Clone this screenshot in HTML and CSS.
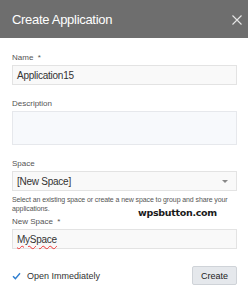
FILE: index.html
```html
<!DOCTYPE html>
<html>
<head>
<meta charset="utf-8">
<link rel="stylesheet" href="styles.css">
</head>
<body>
<div class="dialog">
  <div class="header">
    <span class="title">Create Application</span>
    <svg class="close" width="10" height="10" viewBox="0 0 10 10"><path d="M0.5 0.5L9.5 9.5M9.5 0.5L0.5 9.5" stroke="#e6e6e6" stroke-width="1.1" fill="none"/></svg>
  </div>
  <div class="body">
    <div class="label first">Name&nbsp; *</div>
    <div class="input">Application15</div>
    <div class="label">Description</div>
    <div class="input textarea"></div>
    <div class="label">Space</div>
    <div class="input select"><span>[New Space]</span><span class="arrow"></span></div>
    <div class="help">Select an existing space or create a new space to group and share your applications.</div>
    <div class="label nsl">New Space&nbsp; *</div>
    <div class="input"><span class="spell">MySpace</span></div>
    <div class="footer">
      <div class="check">
        <svg width="9" height="8" viewBox="0 0 9 8"><path d="M1 4.2L3.4 6.6L8 1.2" stroke="#2f7fd0" stroke-width="1.4" fill="none"/></svg>
        <span>Open Immediately</span>
      </div>
      <div class="btn">Create</div>
    </div>
  </div>
  <div class="watermark">wpsbutton.com</div>
</div>
</body>
</html>
```
FILE: styles.css
```css
html, body { margin: 0; padding: 0; background: #fff; }
body { font-family: "Liberation Sans", Arial, sans-serif; width: 248px; height: 300px; overflow: hidden; }
.dialog { position: relative; width: 248px; height: 300px; }
.header {
  height: 38px; background: #6e6e6e; display: flex; align-items: center;
  justify-content: space-between; padding: 0 6px 0 12px; box-sizing: border-box;
}
.title { color: #fff; font-size: 13px; letter-spacing: -0.3px; }
.close { display: block; margin-top: 1px; }
.body { padding: 0 11px 0 12px; }
.label { font-size: 8px; color: #555; line-height: 10px; margin: 14px 0 2px; }
.label.first { margin-top: 15px; }
.label.nsl { margin-top: 4px; }
.input {
  height: 20px; box-sizing: border-box; border: 1px solid #e3e3e3; background: #f9f9f9;
  font-size: 10px; letter-spacing: -0.25px; color: #333; padding: 0 4px; display: flex; align-items: center;
}
.textarea { height: 34px; background: #f7f9fc; border-color: #e6e8ec; }
.select { justify-content: space-between; }
.arrow { width: 0; height: 0; border-left: 3px solid transparent; border-right: 3px solid transparent; border-top: 3px solid #888; margin-right: 4px; }
.help { font-size: 7px; line-height: 9px; color: #555; margin-top: 4px; letter-spacing: -0.1px; }
.spell { text-decoration: underline wavy #e33; text-decoration-thickness: 1px; text-underline-offset: 2px; }
.footer { display: flex; justify-content: space-between; align-items: center; margin-top: 17px; }
.check { display: flex; align-items: center; gap: 6px; font-size: 9px; color: #333; }
.check svg { display: block; }
.btn {
  width: 45px; height: 19px; box-sizing: border-box; background: #e5e8ec; border: 1px solid #cfd3d8;
  border-radius: 2px; font-size: 9px; color: #222; display: flex; align-items: center; justify-content: center;
}
.watermark {
  position: absolute; left: 138px; top: 208px; font-family: "DejaVu Sans", sans-serif; font-weight: bold;
  font-size: 9.5px; line-height: 10px; letter-spacing: -0.3px; color: #1a1a1a;
}
```
